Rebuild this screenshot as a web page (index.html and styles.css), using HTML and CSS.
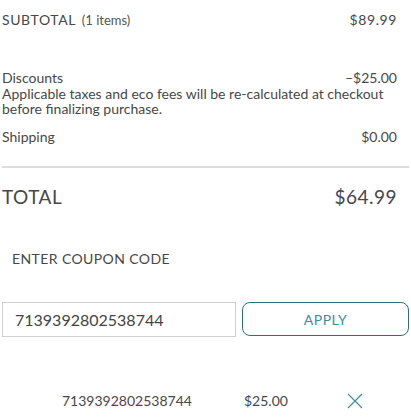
FILE: index.html
```html
<!DOCTYPE html>
<html lang="en">
  <head>
    <meta charset="UTF-8" />
    <meta name="viewport" content="width=device-width, initial-scale=1.0" />
    <title>Order summary</title>
    <link rel="stylesheet" href="styles.css">
  </head>
  <body>
    <div class="summary">
      <div class="row subtotal">
        <span>SUBTOTAL <span class="count">(1 items)</span></span>
        <span>$89.99</span>
      </div>

      <div class="discounts">
        <div class="row">
          <span>Discounts</span>
          <span>&ndash;$25.00</span>
        </div>
        <p class="note">
          Applicable taxes and eco fees will be re-calculated at checkout
          before finalizing purchase.
        </p>
      </div>

      <div class="row shipping">
        <span>Shipping</span>
        <span>$0.00</span>
      </div>

      <hr class="divider" />

      <div class="row total">
        <span>TOTAL</span>
        <span>$64.99</span>
      </div>

      <h2 class="coupon-title">ENTER COUPON CODE</h2>

      <form class="coupon-form">
        <input type="text" class="coupon-input" value="7139392802538744" />
        <button type="button" class="btn-apply">APPLY</button>
      </form>

      <div class="applied">
        <span class="applied-code">7139392802538744</span>
        <span class="applied-amount">$25.00</span>
        <button type="button" class="btn-remove" aria-label="Remove">
          <svg width="16" height="16" viewBox="0 0 16 16">
            <path d="M1 1 L15 15 M15 1 L1 15" stroke="#3a8f99" stroke-width="1.2" fill="none" />
          </svg>
        </button>
      </div>
    </div>
  </body>
</html>
```

FILE: styles.css
```css
body {
  font-family: Lato, "Open Sans", sans-serif;
  background-color: #ffffff;
  color: #474747;
  margin: 0;
  padding: 0;
}

.summary {
  padding: 0 14px 0 2px;
}

.row {
  display: flex;
  justify-content: space-between;
  align-items: baseline;
  font-size: 14px;
}

.subtotal {
  padding-top: 11px;
  letter-spacing: 0.6px;
}

.subtotal .count {
  font-size: 13px;
  letter-spacing: 0;
  color: #555555;
  margin-left: 2px;
}

.discounts {
  margin-top: 41px;
}

.note {
  margin: 0;
  font-size: 14px;
  line-height: 15px;
}

.shipping {
  margin-top: 12px;
}

.divider {
  border: none;
  border-top: 2px solid #dddddd;
  margin: 21px -12px 0 0;
}

.total {
  font-size: 19px;
  margin-top: 17px;
  letter-spacing: 0.5px;
}

.coupon-title {
  font-size: 14px;
  font-weight: normal;
  letter-spacing: 0.4px;
  margin: 42px 0 0 10px;
}

.coupon-form {
  display: flex;
  gap: 6px;
  margin: 35px -12px 0 0;
}

.coupon-input {
  width: 234px;
  height: 35px;
  box-sizing: border-box;
  border: 1px solid #d0d0d0;
  padding: 0 12px;
  font-family: inherit;
  font-size: 16px;
  color: #444444;
}

.btn-apply {
  flex: 1;
  height: 34px;
  border: 1px solid #2c6f7a;
  border-radius: 8px;
  background-color: #ffffff;
  color: #3a8f99;
  font-family: inherit;
  font-size: 14px;
  letter-spacing: 0.5px;
}

.applied {
  display: flex;
  align-items: center;
  margin-top: 55px;
  padding-left: 60px;
  font-size: 14px;
}

.applied-code {
  width: 182px;
}

.applied-amount {
  width: 103px;
}

.btn-remove {
  border: none;
  background: none;
  padding: 0;
  display: flex;
}
```
